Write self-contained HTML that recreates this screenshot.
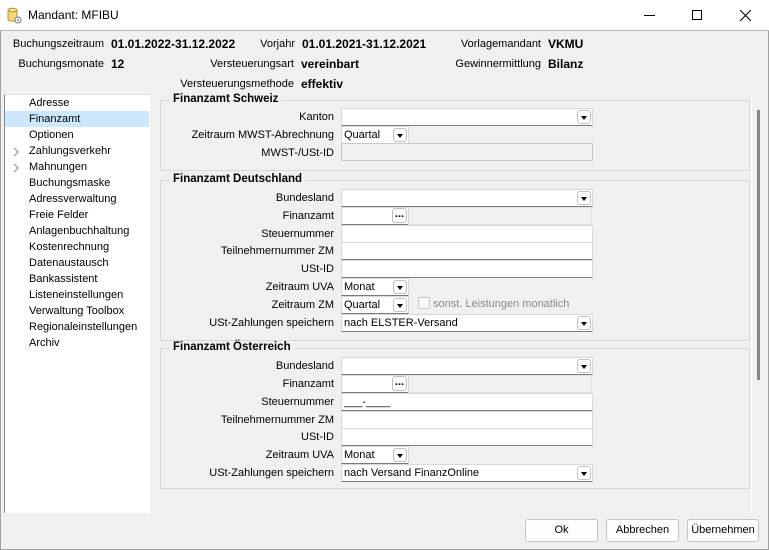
<!DOCTYPE html>
<html><head><meta charset="utf-8"><style>
*{box-sizing:border-box;margin:0;padding:0}
body{width:769px;height:550px;background:#f0f0f0;font-family:"Liberation Sans",sans-serif;font-size:11px;color:#000;position:relative;overflow:hidden}
.a{position:absolute;white-space:nowrap}
.win{position:absolute;left:0;top:0;width:769px;height:550px;border:1px solid #a0a0a0;border-top:none}
.title{position:absolute;left:0;top:0;width:769px;height:31px;background:#fff;border-bottom:1px solid #b8b8b8}
.b{font-weight:bold;font-size:12px}
.r{text-align:right}
.tree{position:absolute;left:4px;top:94px;width:146px;height:419px;background:#fff;border-left:1px solid #8a8a8a;border-top:1px solid #e0e0e0}
.ti{position:absolute;left:24px;height:16px;line-height:17px}
.grp{position:absolute;left:160px;width:590px;border:1px solid #d8d8d8}
.leg{position:absolute;left:8px;top:-8px;background:#f0f0f0;padding:0 4px;font-weight:bold;font-size:11.5px}
.lbl{position:absolute;width:200px;left:134px;text-align:right;height:18px;line-height:19px}
.inp{position:absolute;left:341px;height:18px;background:#fff;border:1px solid #d9d9d9;border-bottom-color:#7a7a7a;line-height:17px;padding-left:2px}
.dis{background:#f0f0f0;border:1px solid #c8c8c8}
.dd{position:absolute;right:1px;top:1px;width:14px;height:14px;border:1px solid #c0c0c0;border-radius:3px;background:#fff}
.dd:after{content:"";position:absolute;left:3px;top:5px;border-left:3px solid transparent;border-right:3px solid transparent;border-top:4px solid #000}
.dots{position:absolute;right:1px;top:0px;width:15px;height:15px;border:1px solid #c0c0c0;border-radius:3px;background:#fff;font-size:11px;line-height:10px;text-align:center;font-weight:bold}
.ext{position:absolute;left:408px;width:184px;height:18px;border:1px solid #e2e2e2;border-left:none}
.btn{position:absolute;top:519px;height:23px;background:#fdfdfd;border:1px solid #c4c4c4;border-radius:3px;text-align:center;line-height:21px}
</style></head><body>
<div class="win"></div>
<div class="title">
<svg class="a" style="left:6px;top:7px" width="16" height="17" viewBox="0 0 16 17"><rect x="2" y="2" width="9" height="12" rx="2" fill="#f5d57a" stroke="#b8902a"/><ellipse cx="6.5" cy="3" rx="4.5" ry="1.8" fill="#fbe6a0" stroke="#b8902a"/><circle cx="12" cy="13" r="3" fill="#fff" stroke="#777"/><circle cx="12" cy="13" r="1" fill="#777"/></svg>
<div class="a" style="left:28px;top:8px;font-size:12px">Mandant: MFIBU</div>
<div class="a" style="left:644px;top:15px;width:11px;height:1px;background:#000"></div>
<div class="a" style="left:692px;top:10px;width:10px;height:10px;border:1px solid #000"></div>
<svg class="a" style="left:740px;top:10px" width="11" height="11"><path d="M0 0L11 11M11 0L0 11" stroke="#000" stroke-width="1.1"/></svg>
</div>

<div class="a r" style="left:0;width:104px;top:38px">Buchungszeitraum</div>
<div class="a b" style="left:111px;top:37px">01.01.2022-31.12.2022</div>
<div class="a r" style="left:200px;width:95px;top:38px">Vorjahr</div>
<div class="a b" style="left:302px;top:37px">01.01.2021-31.12.2021</div>
<div class="a r" style="left:400px;width:141px;top:38px">Vorlagemandant</div>
<div class="a b" style="left:548px;top:37px">VKMU</div>
<div class="a r" style="left:0;width:104px;top:58px">Buchungsmonate</div>
<div class="a b" style="left:111px;top:57px">12</div>
<div class="a r" style="left:150px;width:144px;top:58px">Versteuerungsart</div>
<div class="a b" style="left:301px;top:57px">vereinbart</div>
<div class="a r" style="left:400px;width:141px;top:58px">Gewinnermittlung</div>
<div class="a b" style="left:548px;top:57px">Bilanz</div>
<div class="a r" style="left:150px;width:144px;top:78px">Versteuerungsmethode</div>
<div class="a b" style="left:301px;top:77px">effektiv</div>

<div class="tree">
<div class="a" style="left:0;top:16px;width:144px;height:16px;background:#cce8ff"></div>
<div class="ti" style="top:0">Adresse</div>
<div class="ti" style="top:16px">Finanzamt</div>
<div class="ti" style="top:32px">Optionen</div>
<div class="ti" style="top:48px">Zahlungsverkehr</div>
<div class="ti" style="top:64px">Mahnungen</div>
<div class="ti" style="top:80px">Buchungsmaske</div>
<div class="ti" style="top:96px">Adressverwaltung</div>
<div class="ti" style="top:112px">Freie Felder</div>
<div class="ti" style="top:128px">Anlagenbuchhaltung</div>
<div class="ti" style="top:144px">Kostenrechnung</div>
<div class="ti" style="top:160px">Datenaustausch</div>
<div class="ti" style="top:176px">Bankassistent</div>
<div class="ti" style="top:192px">Listeneinstellungen</div>
<div class="ti" style="top:208px">Verwaltung Toolbox</div>
<div class="ti" style="top:224px">Regionaleinstellungen</div>
<div class="ti" style="top:240px">Archiv</div>
<svg class="a" style="left:8px;top:53px" width="6" height="8"><path d="M1 0L5 4L1 8" stroke="#888" fill="none"/></svg>
<svg class="a" style="left:8px;top:69px" width="6" height="8"><path d="M1 0L5 4L1 8" stroke="#888" fill="none"/></svg>
</div>

<div class="a" style="left:757px;top:110px;width:3px;height:270px;background:#858585"></div>
<div class="a" style="left:751px;top:93px;width:1px;height:420px;background:#fff"></div>

<div class="grp" style="top:100px;height:71px"><div class="leg">Finanzamt Schweiz</div></div>
<div class="grp" style="top:180px;height:161px"><div class="leg">Finanzamt Deutschland</div></div>
<div class="grp" style="top:348px;height:141px"><div class="leg">Finanzamt Österreich</div></div>

<div class="lbl" style="top:108px">Kanton</div>
<div class="inp" style="top:108px;width:252px"><div class="dd"></div></div>
<div class="lbl" style="top:126px">Zeitraum MWST-Abrechnung</div>
<div class="inp" style="top:126px;width:68px">Quartal<div class="dd"></div></div>
<div class="lbl" style="top:144px">MWST-/USt-ID</div>
<div class="inp dis" style="top:143px;width:252px"></div>

<div class="lbl" style="top:189px">Bundesland</div>
<div class="inp" style="top:189px;width:252px"><div class="dd"></div></div>
<div class="lbl" style="top:207px">Finanzamt</div>
<div class="inp" style="top:207px;width:68px"><div class="dots">...</div></div>
<div class="ext" style="top:207px"></div>
<div class="lbl" style="top:225px">Steuernummer</div>
<div class="inp" style="top:225px;width:252px"></div>
<div class="lbl" style="top:242px">Teilnehmernummer ZM</div>
<div class="inp" style="top:242px;width:252px"></div>
<div class="lbl" style="top:260px">USt-ID</div>
<div class="inp" style="top:260px;width:252px"></div>
<div class="lbl" style="top:278px">Zeitraum UVA</div>
<div class="inp" style="top:278px;width:68px">Monat<div class="dd"></div></div>
<div class="lbl" style="top:296px">Zeitraum ZM</div>
<div class="inp" style="top:296px;width:68px">Quartal<div class="dd"></div></div>
<div class="a" style="left:418px;top:297px;width:12px;height:12px;border:1px solid #c8c8c8;border-radius:2px;background:#f8f8f8"></div>
<div class="a" style="left:433px;top:298px;color:#8a8a8a">sonst. Leistungen monatlich</div>
<div class="lbl" style="top:314px">USt-Zahlungen speichern</div>
<div class="inp" style="top:314px;width:252px">nach ELSTER-Versand<div class="dd"></div></div>

<div class="lbl" style="top:357px">Bundesland</div>
<div class="inp" style="top:357px;width:252px"><div class="dd"></div></div>
<div class="lbl" style="top:375px">Finanzamt</div>
<div class="inp" style="top:375px;width:68px"><div class="dots">...</div></div>
<div class="ext" style="top:375px"></div>
<div class="lbl" style="top:393px">Steuernummer</div>
<div class="inp" style="top:393px;width:252px">___-____</div>
<div class="lbl" style="top:411px">Teilnehmernummer ZM</div>
<div class="inp" style="top:411px;width:252px"></div>
<div class="lbl" style="top:428px">USt-ID</div>
<div class="inp" style="top:428px;width:252px"></div>
<div class="lbl" style="top:446px">Zeitraum UVA</div>
<div class="inp" style="top:446px;width:68px">Monat<div class="dd"></div></div>
<div class="lbl" style="top:464px">USt-Zahlungen speichern</div>
<div class="inp" style="top:464px;width:252px">nach Versand FinanzOnline<div class="dd"></div></div>

<div class="btn" style="left:525px;width:73px">Ok</div>
<div class="btn" style="left:606px;width:73px">Abbrechen</div>
<div class="btn" style="left:687px;width:72px">Übernehmen</div>
</body></html>
